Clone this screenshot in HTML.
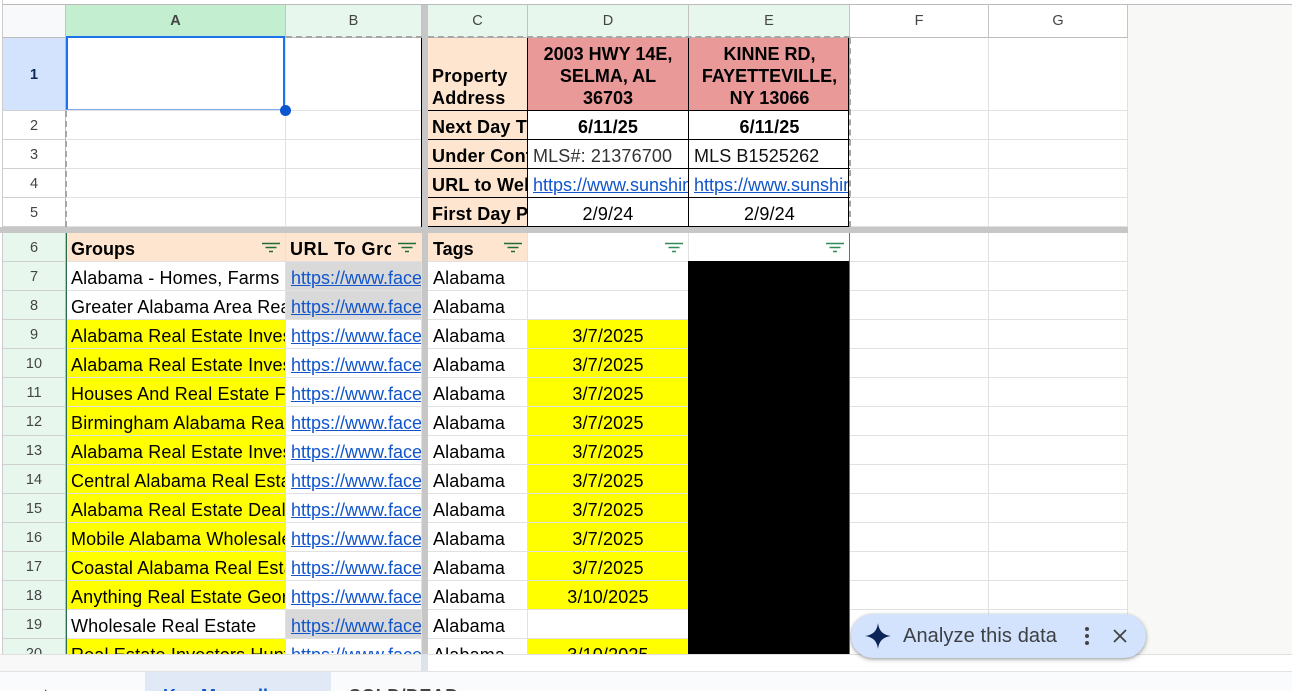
<!DOCTYPE html>
<html><head><meta charset="utf-8"><style>
html,body{margin:0;padding:0;width:1292px;height:691px;overflow:hidden;background:#fff;font-family:"Liberation Sans",Arial,sans-serif}
div,a,span{position:absolute;box-sizing:border-box}
#wrap{left:0;top:0;width:1292px;height:691px;overflow:hidden;background:#fff}
#top .c,#low .c{white-space:nowrap;overflow:hidden;color:#000;font-size:18px;line-height:32px;padding-left:5px;height:29px;top:0;border-right:1px solid #e1e1e1;border-bottom:1px solid #e1e1e1;letter-spacing:.15px}
.r{left:0;width:1292px;height:29px}
.h{left:3px;width:63px;height:29px;text-align:center;font-size:14.5px;line-height:30px;color:#444;border-right:1px solid #bbb;border-bottom:1px solid #d0d0d0;background:#e7f7ee}
.a{left:66px;width:220px}.b{left:286px;width:136px}.cc{left:428px;width:100px}.d{left:528px;width:161px;}.e{left:689px;width:161px}.f{left:850px;width:139px}.g{left:989px;width:139px}
#low .u,#top .u{color:#1155cc;text-decoration:underline;letter-spacing:0}
#low .y{background:#ff0}#low .gr{background:#d9d9d9}
#low .t{text-align:center;padding-left:0}
.ch{top:5px;height:33px;text-align:center;font-size:14.5px;line-height:33px;color:#444;border-right:1px solid #c4c4c4;border-bottom:1px solid #bbb;background:#e7f7ee}
#top .k{background:#fde5d0;font-weight:bold;border-right:1px solid #000;border-bottom:1px solid #000;padding-left:4px;letter-spacing:.2px}
#top .w{border-right:1px solid #000;border-bottom:1px solid #000;background:#fff}
#top .ctr{text-align:center;padding-left:0}
.fl{width:18px;height:12px;top:9px}
.dash-h{height:0;border-top:2px dashed #a6a6a6}
.dash-v{width:0;border-left:2px dashed #a6a6a6}
</style></head><body><div id="wrap">
<div style="left:1128px;top:5px;width:164px;height:649px;background:#f8f9f7"></div>
<div style="left:3px;top:4px;width:1125px;height:1px;background:#bbb"></div>
<div style="left:1128px;top:4px;width:164px;height:1px;background:#bbb"></div>
<div style="left:0;top:0;width:3px;height:654px;background:#fff;border-right:1px solid #ccc"></div>
<div class="ch" style="left:3px;width:63px;background:#f8f9fa"></div>
<div class="ch" style="left:66px;width:220px;background:#c4eed0;font-weight:bold">A</div>
<div class="ch" style="left:286px;width:136px">B</div>
<div class="ch" style="left:428px;width:100px">C</div>
<div class="ch" style="left:528px;width:161px">D</div>
<div class="ch" style="left:689px;width:161px">E</div>
<div class="ch" style="left:850px;width:139px;background:#fff">F</div>
<div class="ch" style="left:989px;width:139px;background:#fff">G</div>

<div id="top" style="left:0;top:0;width:1292px;height:227px">
<div class="h" style="top:38px;height:73px;line-height:75px;background:#d3e3fd;font-weight:bold;color:#0b2a55">1</div>
<div class="h" style="top:111px;background:#fff">2</div>
<div class="h" style="top:140px;background:#fff">3</div>
<div class="h" style="top:169px;background:#fff">4</div>
<div class="h" style="top:198px;background:#fff">5</div>

<div class="c a" style="top:38px;height:73px"></div><div class="c b" style="top:38px;height:73px"></div>
<div class="c f" style="top:38px;height:73px"></div><div class="c g" style="top:38px;height:73px"></div>
<div class="r" style="top:111px"><div class="c a"></div><div class="c b"></div><div class="c f"></div><div class="c g"></div></div>
<div class="r" style="top:140px"><div class="c a"></div><div class="c b"></div><div class="c f"></div><div class="c g"></div></div>
<div class="r" style="top:169px"><div class="c a"></div><div class="c b"></div><div class="c f"></div><div class="c g"></div></div>
<div class="r" style="top:198px"><div class="c a"></div><div class="c b"></div><div class="c f"></div><div class="c g"></div></div>

<div class="c cc k" style="top:38px;height:73px;line-height:22px;white-space:normal;padding-top:27px">Property Address</div>
<div class="c d k" style="top:38px;height:73px;line-height:22px;white-space:normal;background:#ea9999;text-align:center;padding:5px 0 0;letter-spacing:0">2003 HWY 14E,<br>SELMA, AL<br>36703</div>
<div class="c e k" style="top:38px;height:73px;line-height:22px;white-space:normal;background:#ea9999;text-align:center;padding:5px 0 0;border-right:0;letter-spacing:0">KINNE RD,<br>FAYETTEVILLE,<br>NY 13066</div>

<div class="r" style="top:111px"><div class="c cc k">Next Day Transaction</div><div class="c d w ctr" style="font-weight:bold">6/11/25</div><div class="c e w ctr" style="font-weight:bold;border-right:0">6/11/25</div></div>
<div class="r" style="top:140px"><div class="c cc k">Under Contract</div><div class="c d w" style="color:#333;letter-spacing:.15px">MLS#: 21376700</div><div class="c e w" style="color:#111;letter-spacing:.1px;border-right:0">MLS B1525262</div></div>
<div class="r" style="top:169px"><div class="c cc k">URL to Website</div><div class="c d w u">https://www.sunshinestate</div><div class="c e w u" style="border-right:0">https://www.sunshinestate</div></div>
<div class="r" style="top:198px"><div class="c cc k">First Day Posted</div><div class="c d w ctr">2/9/24</div><div class="c e w ctr" style="border-right:0">2/9/24</div></div>
</div>
<div style="left:421px;top:38px;width:1px;height:189px;background:#000"></div>
<div style="left:848px;top:38px;height:189px;width:1px;background:#000"></div>
<div style="left:849px;top:38px;height:189px;width:0;border-left:2px dashed #a6a6a6"></div>
<div class="dash-h" style="left:286px;top:36px;width:136px"></div>
<div class="dash-h" style="left:428px;top:36px;width:422px"></div>
<div class="dash-v" style="left:65px;top:111px;height:116px"></div>

<!-- selection -->
<div style="left:66px;top:36px;width:219px;height:74px;border:2px solid #1a73e8;border-bottom:1px solid #7fa9e8"></div>
<div style="left:280px;top:105px;width:11px;height:11px;border-radius:50%;background:#0b57d0;border:0"></div>

<!-- freeze bars -->
<div style="left:0;top:227px;width:1128px;height:6px;background:#c7c7c7"></div>
<div style="left:422px;top:5px;width:6px;height:649px;background:#c7c7c7"></div>

<div id="low" style="left:0;top:233px;width:1292px;height:421px;overflow:hidden">
<div class="r" style="top:0"><div class="h" style="top:0">6</div><div class="c a" style="background:#fde5d0;font-weight:bold;letter-spacing:0">Groups</div><div class="c b" style="background:#fde5d0;font-weight:bold;padding-right:28px;padding-left:4px;letter-spacing:.6px">URL To Groups</div><div class="c cc" style="background:#fde5d0;font-weight:bold;letter-spacing:0">Tags</div><div class="c d"></div><div class="c e"></div><div class="c f"></div><div class="c g"></div></div>
<div style="left:391px;top:0;width:31px;height:28px;background:#fde5d0"></div>
<div class="r" style="top:29px"><div class="h" style="top:0">7</div><div class="c a">Alabama - Homes, Farms &amp; Land</div><div class="c b gr u">https://www.facebook</div><div class="c cc">Alabama</div><div class="c d"></div><div class="c f"></div><div class="c g"></div></div>
<div class="r" style="top:58px"><div class="h" style="top:0">8</div><div class="c a">Greater Alabama Area Real Estate</div><div class="c b gr u">https://www.facebook</div><div class="c cc">Alabama</div><div class="c d"></div><div class="c f"></div><div class="c g"></div></div>
<div class="r" style="top:87px"><div class="h" style="top:0">9</div><div class="c a y">Alabama Real Estate Investors</div><div class="c b u">https://www.facebook</div><div class="c cc">Alabama</div><div class="c d y t">3/7/2025</div><div class="c f"></div><div class="c g"></div></div>
<div class="r" style="top:116px"><div class="h" style="top:0">10</div><div class="c a y">Alabama Real Estate Investors</div><div class="c b u">https://www.facebook</div><div class="c cc">Alabama</div><div class="c d y t">3/7/2025</div><div class="c f"></div><div class="c g"></div></div>
<div class="r" style="top:145px"><div class="h" style="top:0">11</div><div class="c a y">Houses And Real Estate For Sale</div><div class="c b u">https://www.facebook</div><div class="c cc">Alabama</div><div class="c d y t">3/7/2025</div><div class="c f"></div><div class="c g"></div></div>
<div class="r" style="top:174px"><div class="h" style="top:0">12</div><div class="c a y" style="letter-spacing:.2px">Birmingham Alabama Real Estate</div><div class="c b u">https://www.facebook</div><div class="c cc">Alabama</div><div class="c d y t">3/7/2025</div><div class="c f"></div><div class="c g"></div></div>
<div class="r" style="top:203px"><div class="h" style="top:0">13</div><div class="c a y">Alabama Real Estate Investors</div><div class="c b u">https://www.facebook</div><div class="c cc">Alabama</div><div class="c d y t">3/7/2025</div><div class="c f"></div><div class="c g"></div></div>
<div class="r" style="top:232px"><div class="h" style="top:0">14</div><div class="c a y">Central Alabama Real Estate</div><div class="c b u">https://www.facebook</div><div class="c cc">Alabama</div><div class="c d y t">3/7/2025</div><div class="c f"></div><div class="c g"></div></div>
<div class="r" style="top:261px"><div class="h" style="top:0">15</div><div class="c a y">Alabama Real Estate Deals</div><div class="c b u">https://www.facebook</div><div class="c cc">Alabama</div><div class="c d y t">3/7/2025</div><div class="c f"></div><div class="c g"></div></div>
<div class="r" style="top:290px"><div class="h" style="top:0">16</div><div class="c a y">Mobile Alabama Wholesale</div><div class="c b u">https://www.facebook</div><div class="c cc">Alabama</div><div class="c d y t">3/7/2025</div><div class="c f"></div><div class="c g"></div></div>
<div class="r" style="top:319px"><div class="h" style="top:0">17</div><div class="c a y">Coastal Alabama Real Estate</div><div class="c b u">https://www.facebook</div><div class="c cc">Alabama</div><div class="c d y t">3/7/2025</div><div class="c f"></div><div class="c g"></div></div>
<div class="r" style="top:348px"><div class="h" style="top:0">18</div><div class="c a y">Anything Real Estate Georgia</div><div class="c b u">https://www.facebook</div><div class="c cc">Alabama</div><div class="c d y t">3/10/2025</div><div class="c f"></div><div class="c g"></div></div>
<div class="r" style="top:377px"><div class="h" style="top:0">19</div><div class="c a">Wholesale Real Estate</div><div class="c b gr u">https://www.facebook</div><div class="c cc">Alabama</div><div class="c d"></div><div class="c f"></div><div class="c g"></div></div>
<div class="r" style="top:406px"><div class="h" style="top:0">20</div><div class="c a y">Real Estate Investors Hunting</div><div class="c b u">https://www.facebook</div><div class="c cc">Alabama</div><div class="c d y t">3/10/2025</div><div class="c f"></div><div class="c g"></div></div>
<div style="left:688px;top:28px;width:161px;height:393px;background:#000"></div>
<div style="left:849px;top:0;height:421px;width:1px;background:#1e9e50"></div>
<div style="left:66px;top:0;height:421px;width:1px;background:#2c6e49"></div>
<div style="left:422px;top:0;width:6px;height:421px;background:#c7c7c7"></div>
</div>

<!-- filter icons -->
<svg class="fl" style="position:absolute;left:262px;top:242px" width="18" height="12" viewBox="0 0 18 12"><path d="M0 1.5h18M3.5 5.5h11M7 9.5h4" stroke="#1f6b3a" stroke-width="1.4" fill="none"/></svg>
<svg class="fl" style="position:absolute;left:398px;top:242px" width="18" height="12" viewBox="0 0 18 12"><path d="M0 1.5h18M3.5 5.5h11M7 9.5h4" stroke="#1f6b3a" stroke-width="1.4" fill="none"/></svg>
<svg class="fl" style="position:absolute;left:504px;top:242px" width="18" height="12" viewBox="0 0 18 12"><path d="M0 1.5h18M3.5 5.5h11M7 9.5h4" stroke="#1f6b3a" stroke-width="1.4" fill="none"/></svg>
<svg class="fl" style="position:absolute;left:665px;top:242px" width="18" height="12" viewBox="0 0 18 12"><path d="M0 1.5h18M3.5 5.5h11M7 9.5h4" stroke="#2e8b57" stroke-width="1.4" fill="none"/></svg>
<svg class="fl" style="position:absolute;left:826px;top:242px" width="18" height="12" viewBox="0 0 18 12"><path d="M0 1.5h18M3.5 5.5h11M7 9.5h4" stroke="#2e8b57" stroke-width="1.4" fill="none"/></svg>

<!-- bottom -->
<div style="left:0;top:654px;width:1292px;height:17px;background:#fff;border-top:1px solid #e0e0e0"></div>
<div style="left:0;top:655px;width:421px;height:16px;background:#f8f8f8"></div>
<div style="left:421px;top:655px;width:7px;height:16px;background:#dde3ea"></div>
<div style="left:0;top:671px;width:1292px;height:20px;background:#f9fbfd;border-top:1px solid #e3e3e3"></div>
<div style="left:145px;top:672px;width:186px;height:19px;background:#e1e9f7"></div>
<div style="left:163px;top:686px;font-size:18px;line-height:20px;font-weight:bold;color:#0b57d0;white-space:nowrap">Key Manually</div>
<div style="left:349px;top:686px;font-size:18px;line-height:20px;font-weight:bold;color:#444;white-space:nowrap;letter-spacing:.4px">SOLD/DEAD</div>
<div style="left:41px;top:686px;font-size:16px;line-height:18px;color:#444">+</div>

<!-- pill -->
<div style="left:851px;top:614px;width:295px;height:44px;border-radius:22px;background:#d3e3fd;box-shadow:0 1px 3px rgba(60,64,67,.45),0 2px 6px rgba(60,64,67,.15)">
<svg style="position:absolute;left:14px;top:9px" width="26" height="26" viewBox="0 0 26 26"><path d="M13 0C14 8 18 12 26 13C18 14 14 18 13 26C12 18 8 14 0 13C8 12 12 8 13 0Z" fill="#0b2559"/></svg>
<div style="left:52px;top:9px;font-size:20px;line-height:26px;color:#3c4043;white-space:nowrap;letter-spacing:.1px">Analyze this data</div>
<svg style="position:absolute;left:231px;top:12px" width="10" height="20" viewBox="0 0 10 20"><circle cx="5" cy="3" r="2" fill="#444"/><circle cx="5" cy="10" r="2" fill="#444"/><circle cx="5" cy="17" r="2" fill="#444"/></svg>
<svg style="position:absolute;left:261px;top:14px" width="16" height="16" viewBox="0 0 16 16"><path d="M2 2L14 14M14 2L2 14" stroke="#444" stroke-width="1.8" fill="none"/></svg>
</div>
</div></body></html>
